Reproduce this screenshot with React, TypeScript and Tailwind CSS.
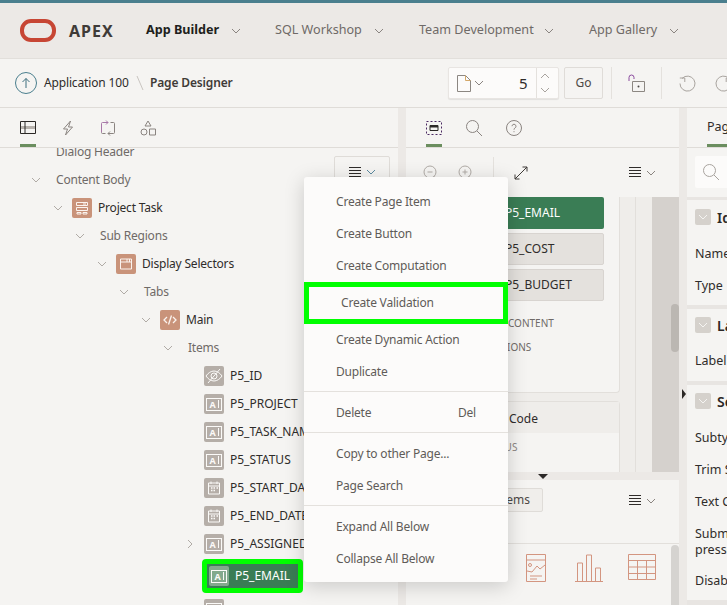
import React from "react";

const FONT = "font-['Noto_Sans',sans-serif]";

function Chevron({ className = "", color = "#8a8480", size = 10 }: { className?: string; color?: string; size?: number }) {
  return (
    <svg width={size} height={size} viewBox="0 0 10 10" fill="none" className={`shrink-0 ${className}`}>
      <path d="M1 3l4 4 4-4" stroke={color} strokeWidth="1" />
    </svg>
  );
}

function Hamburger({ color = "#2f2c2a" }: { color?: string }) {
  return (
    <svg width="12" height="11" viewBox="0 0 12 11" fill="none">
      <path d="M0 .5h12M0 3.5h12M0 6.5h12M0 9.5h12" stroke={color} strokeWidth="1" />
    </svg>
  );
}

function MenuToggle({ chev = "#8a8480" }: { chev?: string }) {
  return (
    <div className="flex items-center gap-[5px]">
      <Hamburger />
      <Chevron color={chev} />
    </div>
  );
}

function RegionIcon({ kind }: { kind: "project" | "selector" | "code" }) {
  return (
    <div className="w-5 h-5 rounded-[2px] bg-[#c9937a] flex items-center justify-center shrink-0">
      <svg width="16" height="16" viewBox="0 0 16 16" fill="none" stroke="#fbf3ee" strokeWidth="1">
        {kind === "project" && (
          <>
            <path d="M2.5 2.5h11v3h-11zM9 4h3" />
            <path d="M2.5 7.5h11v3h-11zM3 12.5h4v1.5H3zM9 12.5h4v1.5H9z" />
          </>
        )}
        {kind === "selector" && <path d="M2.5 3h11v10h-11zM2.5 6h11M9 3v3M11.5 3v3" />}
        {kind === "code" && <path d="M5 5L2 8l3 3M11 5l3 3-3 3M9.5 3.5l-3 9" strokeWidth="1.3" />}
      </svg>
    </div>
  );
}

function ItemIcon({ kind, active = false }: { kind: "text" | "date" | "hidden"; active?: boolean }) {
  return (
    <div className={`w-5 h-5 rounded-[2px] flex items-center justify-center shrink-0 ${active ? "bg-[#83a98d]" : "bg-[#b5aea8]"}`}>
      {kind === "text" && (
        <div className="w-[16px] h-[13px] border border-[#fbfaf8] flex items-center justify-center gap-[2px] text-[#fbfaf8] text-[9px] font-bold leading-none">
          <span>A</span>
          <span className="w-px h-[8px] bg-[#fbfaf8]" />
        </div>
      )}
      {kind === "date" && (
        <svg width="16" height="16" viewBox="0 0 16 16" fill="none" stroke="#fbfaf8" strokeWidth="1">
          <path d="M2.5 3h11v11h-11zM2.5 6h11M5 1.5V4M11 1.5V4" />
          <path d="M5 8h1.5M7.5 8H9M10.5 8H12M5 10.5h1.5M7.5 10.5H9" strokeWidth="1.4" />
        </svg>
      )}
      {kind === "hidden" && (
        <svg width="18" height="16" viewBox="0 0 18 16" fill="none" stroke="#fbfaf8" strokeWidth="1">
          <path d="M1 8c2-3 5-5 8-5s6 2 8 5c-2 3-5 5-8 5s-6-2-8-5z" />
          <circle cx="9" cy="8" r="3" />
          <path d="M15 1L3 15" />
        </svg>
      )}
    </div>
  );
}

type Row = {
  label: string;
  indent: number;
  open?: boolean;
  closed?: boolean;
  region?: "project" | "selector" | "code";
  item?: "text" | "date" | "hidden";
};

const TREE: Row[] = [
  { label: "Dialog Header", indent: 34 },
  { label: "Content Body", indent: 34, open: true },
  { label: "Project Task", indent: 56, open: true, region: "project" },
  { label: "Sub Regions", indent: 78, open: true },
  { label: "Display Selectors", indent: 100, open: true, region: "selector" },
  { label: "Tabs", indent: 122, open: true },
  { label: "Main", indent: 144, open: true, region: "code" },
  { label: "Items", indent: 166, open: true },
  { label: "P5_ID", indent: 188, item: "hidden" },
  { label: "P5_PROJECT", indent: 188, item: "text" },
  { label: "P5_TASK_NAME", indent: 188, item: "text" },
  { label: "P5_STATUS", indent: 188, item: "text" },
  { label: "P5_START_DATE", indent: 188, item: "date" },
  { label: "P5_END_DATE", indent: 188, item: "date" },
  { label: "P5_ASSIGNED_TO", indent: 188, closed: true, item: "text" },
];

function TreeRow({ row }: { row: Row }) {
  let text = "ml-[6px] text-[#6f6a67] tracking-[-0.2px]";
  if (row.region) text = "ml-[6px] text-[#2f2c2a] tracking-[-0.2px]";
  if (row.item) text = "ml-[6px] text-[#2f2c2a]";
  return (
    <div className="h-7 flex items-center whitespace-nowrap" style={{ paddingLeft: row.indent - 3 }}>
      <div className="w-[19px] flex justify-start shrink-0">
        {row.open && <Chevron color="#b0aba6" />}
        {row.closed && <Chevron color="#b0aba6" className="-rotate-90" />}
      </div>
      {row.region && <RegionIcon kind={row.region} />}
      {row.item && <ItemIcon kind={row.item} />}
      <span className={`text-[12px] ${text}`}>{row.label}</span>
    </div>
  );
}

function TabIcon({ children }: { children: React.ReactNode }) {
  return (
    <svg width="16" height="16" viewBox="0 0 16 16" fill="none" stroke="#8a8480" strokeWidth="1">
      {children}
    </svg>
  );
}

function PropRow({ label, y }: { label: string; y: string }) {
  return <div className={`text-[12.5px] leading-[18px] text-[#2f2c2a] whitespace-nowrap ${y}`}>{label}</div>;
}

function SectionHead({ label }: { label: string }) {
  return (
    <div className="h-4 flex items-center gap-[6px]">
      <div className="w-4 h-4 rounded-[2px] bg-[#d5d1cc] flex items-center justify-center shrink-0">
        <Chevron color="#f5f4f2" />
      </div>
      <span className="text-[14px] font-semibold text-[#2b2826] whitespace-nowrap">{label}</span>
    </div>
  );
}

function MenuItem({ label, right }: { label: string; right?: string }) {
  return (
    <div className="h-8 pl-8 pr-8 flex items-center justify-between text-[12px] tracking-[-0.2px] text-[#5f5b58] whitespace-nowrap">
      <span>{label}</span>
      {right && <span>{right}</span>}
    </div>
  );
}

function MenuSep() {
  return <div className="mt-[3px] mb-[5px] h-px bg-[#e4e1dd]" />;
}

export default function App() {
  return (
    <div className={`${FONT} relative w-[727px] h-[605px] overflow-hidden bg-[#f5f4f2] flex flex-col`}>
      <div className="h-[3px] bg-[#4a7f8e] shrink-0" />

      {/* header */}
      <header className="h-[56px] shrink-0 bg-[#ece9e6] border-b border-[#e2dfdb] flex items-center pl-5 text-[12.6px] text-[#6f6a67] whitespace-nowrap">
        <div className="w-[36px] h-[23px] rounded-[11px] border-[4px] border-[#c74634] shrink-0" />
        <span className="ml-[13px] w-[77px] text-[16px] font-bold tracking-[1px] text-[#3f3b38] shrink-0">APEX</span>
        <span className="w-[85px] font-bold text-[#201e1c] shrink-0">App Builder</span>
        <Chevron />
        <span className="ml-[34px] w-[99px] shrink-0">SQL Workshop</span>
        <Chevron />
        <span className="ml-[35px] w-[125px] shrink-0">Team Development</span>
        <Chevron />
        <span className="ml-[35px] w-[80px] shrink-0">App Gallery</span>
        <Chevron />
      </header>

      {/* toolbar */}
      <div className="h-[49px] shrink-0 border-b border-[#dfdcd8] flex items-center pl-[15px] text-[12px] text-[#2f2c2a] whitespace-nowrap [&>*]:shrink-0">
        <div className="w-[22px] h-[22px] rounded-full border border-[#4a7f8e] flex items-center justify-center">
          <svg width="12" height="12" viewBox="0 0 12 12" fill="none" stroke="#3d6f7e">
            <path d="M6 11V1.5M2.5 5L6 1.5 9.5 5" />
          </svg>
        </div>
        <span className="ml-[7px] w-[85px] tracking-[-0.15px]">Application 100</span>
        <svg width="8" height="16" viewBox="0 0 8 16" fill="none" className="ml-[7px]">
          <path d="M1 1l6 14" stroke="#c9c5c1" />
        </svg>
        <span className="ml-[6px] w-[298px] font-semibold tracking-[-0.15px] text-[#3f3b38]">Page Designer</span>

        <div className="w-[111px] h-8 bg-[#fcfbfa] rounded-[2px] border border-[#e8e5e2] shadow-[0_1px_1px_rgba(0,0,0,0.08)] flex items-center">
          <svg width="14" height="17" viewBox="0 0 14 17" fill="none" className="ml-[8px] shrink-0">
            <path d="M.5.5h8l5 5v11H.5z" stroke="#8c8782" fill="#fcfbfa" />
            <path d="M8.5.5v5h5" stroke="#d4a869" />
          </svg>
          <Chevron className="ml-[3px]" />
          <span className="ml-[35px] w-[9px] text-[15px] text-[#2f2c2a]">5</span>
          <div className="ml-[8px] flex-1 pr-[5px] h-full border-l border-[#e4e1dd] flex flex-col items-center justify-center gap-[4px]">
            <Chevron color="#a8a39e" className="rotate-180" />
            <Chevron color="#a8a39e" />
          </div>
        </div>
        <div className="ml-[5px] w-[39px] h-8 bg-[#f5f4f2] rounded-[2px] border border-[#dfdcd8] flex items-center justify-center text-[#4d4946]">Go</div>
        <div className="ml-2 w-px h-8 bg-[#e4e1dd]" />
        <svg width="17" height="18" viewBox="0 0 17 18" fill="none" className="ml-4">
          <path d="M1 7V3.5a2.5 2.5 0 0 1 5 0V5" stroke="#8a4a9e" />
          <path d="M4.5 7.5h12v10h-12z" stroke="#8c8782" />
          <circle cx="10.5" cy="12.5" r="1" fill="#4d4946" />
        </svg>
        <div className="ml-4 w-px h-8 bg-[#e4e1dd]" />
        <svg width="17" height="17" viewBox="0 0 17 17" fill="none" stroke="#a8a39e" className="ml-[17px]">
          <path d="M3 3.5A7.5 7.5 0 1 1 1 8.5" />
          <path d="M.8 3h5v4" />
        </svg>
        <svg width="17" height="17" viewBox="0 0 17 17" fill="none" stroke="#a8a39e" className="ml-[19px]">
          <path d="M14 3.5A7.5 7.5 0 1 0 16 8.5" />
          <path d="M16.2 3h-5v4" />
        </svg>
      </div>

      {/* panels */}
      <div className="flex-1 min-h-0 flex">
        {/* left */}
        <div className="w-[398px] shrink-0 flex flex-col min-h-0">
          <div className="h-10 shrink-0 border-b border-[#dfdcd8] relative flex items-center pl-5 gap-[24px]">
            <svg width="16" height="14" viewBox="0 0 16 14" fill="none">
              <path d="M.5.5h15v12h-15z" stroke="#2b2826" />
              <path d="M1 5h14v3H1z" fill="#b7b2ad" />
              <path d="M5 1v11" stroke="#2b2826" />
            </svg>
            <TabIcon>
              <path d="M10.5 1L3.5 9h4l-2 6 7-8h-4l2-6z" />
            </TabIcon>
            <TabIcon>
              <path d="M1.5 12.5V3.500a1 1 0 0 1 1-1H8M6 .5l2 2-2 2" stroke="#a878a8" />
              <path d="M14.500 3.500v9a1 1 0 0 1-1 1H8M10 11.500l-2 2 2 2M10.500 2.500h3a1 1 0 0 1 1 1M1.500 12.500a1 1 0 0 0 1 1h3" />
            </TabIcon>
            <TabIcon>
              <path d="M8 1l3 5H5z" />
              <circle cx="4" cy="12" r="3" />
              <path d="M9.500 9h6v6h-6z" />
            </TabIcon>
            <div className="absolute left-5 bottom-0 w-4 h-[3px] bg-[#6b8e5f]" />
          </div>
          <div className="flex-1 min-h-0 overflow-hidden relative">
            <div className="-mt-[10px]">
              {TREE.map((row) => (
                <TreeRow key={row.label} row={row} />
              ))}
              <div className="ml-[202px] mt-px w-[101px] h-[34px] rounded-[4px] border-[5px] border-[#00ff00] bg-[#3a7d55] flex items-center pl-[2px] text-[12px] text-white">
                <ItemIcon kind="text" active />
                <span className="ml-[6px]">P5_EMAIL</span>
              </div>
              <div className="ml-[204px] mt-[6px]">
                <ItemIcon kind="text" />
              </div>
            </div>
            <div className="absolute left-[334px] top-2 w-[56px] h-8 rounded-[2px] border border-[#dfdcd8] flex items-center justify-center">
              <MenuToggle chev="#5b8aa0" />
            </div>
          </div>
        </div>

        <div className="w-2 shrink-0 bg-[#ece9e6]" />

        {/* center */}
        <div className="w-[273px] shrink-0 flex flex-col min-h-0">
          <div className="h-10 shrink-0 border-b border-[#dfdcd8] relative flex items-center pl-5 gap-[24px]">
            <svg width="16" height="14" viewBox="0 0 16 14" fill="none">
              <path d="M.5.5h15v13h-15z" stroke="#4b2a63" strokeDasharray="2 2" />
              <path d="M4 4.500h8v5H4z" stroke="#2b2826" />
              <path d="M4 5h8v1.500H4z" fill="#2b2826" />
            </svg>
            <svg width="16" height="16" viewBox="0 0 16 16" fill="none" stroke="#8a8480">
              <circle cx="6.500" cy="6.500" r="6" />
              <path d="M11 11l5 5" />
            </svg>
            <svg width="16" height="16" viewBox="0 0 16 16" fill="none" stroke="#8a8480">
              <circle cx="8" cy="8" r="7.500" />
              <path d="M6 6.200a2 2 0 1 1 3 1.800c-.7.400-1 .8-1 1.700M8 11.200v1" />
            </svg>
            <div className="absolute left-5 bottom-0 w-4 h-[3px] bg-[#6b8e5f]" />
          </div>

          <div className="h-[49px] shrink-0 flex items-center pl-[17px] pr-[23px]">
            <svg width="16" height="16" viewBox="0 0 16 16" fill="none" stroke="#b0aba6">
              <circle cx="7" cy="7" r="6" />
              <path d="M4.500 7h5M11.500 11.500L15 15" />
            </svg>
            <svg width="16" height="16" viewBox="0 0 16 16" fill="none" stroke="#b0aba6" className="ml-[19px]">
              <circle cx="7" cy="7" r="6" />
              <path d="M4.500 7h5M7 4.500v5M11.500 11.500L15 15" />
            </svg>
            <div className="ml-[19px] w-px h-8 bg-[#e4e1dd]" />
            <svg width="14" height="14" viewBox="0 0 14 14" fill="none" stroke="#3f3b38" className="ml-5">
              <path d="M1 13L13 1M8.500 1H13v4.500M1 8.500V13h4.500" />
            </svg>
            <div className="ml-auto">
              <MenuToggle />
            </div>
          </div>

          <div className="h-[275px] shrink-0 relative flex bg-[#efedea]">
            <div className="w-[214px] shrink-0 flex flex-col">
              <div className="h-[196px] shrink-0 bg-[#f5f4f2] border-b border-r border-[#e2dfdb] rounded-br-[4px] pl-[64px]">
                <div className="w-[134px] h-8 rounded-[2px] bg-[#3a7d55] text-white text-[12px] flex items-center pl-[35px]">P5_EMAIL</div>
                <div className="mt-1 w-[134px] h-8 rounded-[2px] bg-[#e4e1dd] border border-[#d8d4d0] text-[#2f2c2a] text-[12px] flex items-center pl-[34px]">P5_COST</div>
                <div className="mt-1 w-[134px] h-8 rounded-[2px] bg-[#e4e1dd] border border-[#d8d4d0] text-[#2f2c2a] text-[12px] flex items-center pl-[34px]">P5_BUDGET</div>
                <div className="mt-[14px] pl-[38px] text-[10px] text-[#6f6a67] leading-[16px]">CONTENT</div>
                <div className="mt-2 pl-[18px] text-[10px] text-[#6f6a67] leading-[16px]">REGIONS</div>
              </div>
              <div className="mt-2 flex-1 bg-[#f5f4f2] border border-b-0 border-[#e2dfdb] rounded-t-[4px]">
                <div className="h-[31px] bg-[#efedea] flex items-center pl-[102px] pt-[2px] text-[12px] text-[#2f2c2a]">Code</div>
                <div className="pl-[76px] pt-[7px] text-[10px] text-[#8a8480]">STATUS</div>
              </div>
            </div>
            <div className="w-4 shrink-0 border-r border-[#e2dfdb]" />
            <div className="w-[16px] shrink-0" />
            <div className="flex-1 bg-[#d5d1cd]" />
            <div className="absolute right-0 top-[107px] w-2 h-12 rounded-[4px] bg-[#bbb7b2]" />
          </div>

          <div className="h-2 shrink-0 bg-[#ece9e6] relative">
            <div className="absolute left-[132px] top-[2px] w-0 h-0 border-x-[5px] border-x-transparent border-t-[5px] border-t-[#2b2826]" />
          </div>

          <div className="flex-1 min-h-0 relative">
            <div className="h-[64px] border-b border-[#e2dfdb] relative pt-2">
              <div className="ml-[90px] w-[47px] h-6 rounded-[2px] bg-[#f0eeeb] border border-[#dfdcd8] flex items-center justify-end pr-3 text-[12px] text-[#4d4946]">
                Items
              </div>
              <div className="absolute left-[223px] top-[15px]">
                <MenuToggle />
              </div>
            </div>
            <div className="flex pl-[120px] pt-[10px]">
              <svg width="20" height="28" viewBox="0 0 20 28" fill="none" stroke="#d39580">
                <path d="M.5.5h19v27H.5zM.5 6h19M4 22h12M4 25h7" />
                <circle cx="4" cy="11" r="1.500" />
                <path d="M1 17l5 1 5-6 3 3 5-4" />
              </svg>
              <svg width="28" height="28" viewBox="0 0 28 28" fill="none" stroke="#d39580" className="ml-[29px]">
                <path d="M0 27.500h28M2.500 27V9h5v18M11.500 27V1h5v26M20.500 27V14h5v13" />
              </svg>
              <svg width="28" height="26" viewBox="0 0 28 26" fill="none" stroke="#d39580" className="ml-[25px]">
                <path d="M.5.500h27v25H.5zM.5 6.500h27M.5 13h27M.5 19.500h27M9.500 6.500v19M18.500 6.500v19" />
              </svg>
            </div>
            <div className="absolute right-0 top-[65px] bottom-0 w-2 rounded-t-[4px] bg-[#d5d3d0]" />
          </div>
        </div>

        <div className="w-2 shrink-0 bg-[#ece9e6] relative">
          <div className="absolute left-[3px] top-[281px] w-0 h-0 border-y-[5px] border-y-transparent border-l-[4px] border-l-[#2b2826]" />
        </div>

        {/* right */}
        <div className="flex-1 min-w-0 overflow-hidden flex flex-col">
          <div className="h-10 shrink-0 border-b border-[#dfdcd8] relative flex items-center pl-5 text-[12.5px] text-[#2f2c2a] whitespace-nowrap">
            Page
            <div className="absolute left-5 right-0 bottom-0 h-[3px] bg-[#6b8e5f]" />
          </div>
          <div className="h-[49px] shrink-0 pl-2 pt-2">
            <div className="h-8 w-[60px] bg-[#fcfbfa] rounded-l-[2px] flex items-center pl-2">
              <svg width="16" height="16" viewBox="0 0 16 16" fill="none" stroke="#a8a39e">
                <circle cx="6.500" cy="6.500" r="6" />
                <path d="M11 11l5 5" />
              </svg>
            </div>
          </div>

          <div className="h-[108px] shrink-0 border-t-[3px] border-[#e8e5e2] pl-2 pt-[9px]">
            <SectionHead label="Identification" />
            <PropRow label="Name" y="mt-5" />
            <PropRow label="Type" y="mt-[14px]" />
          </div>

          <div className="h-[76px] shrink-0 border-t-4 border-[#e8e5e2] pl-2 pt-2">
            <SectionHead label="Layout" />
            <PropRow label="Label" y="mt-[19px]" />
          </div>

          <div className="h-[219px] shrink-0 border-t-4 border-[#e8e5e2] pl-2 pt-2">
            <SectionHead label="Settings" />
            <PropRow label="Subtype" y="mt-5" />
            <PropRow label="Trim Spaces" y="mt-[14px]" />
            <PropRow label="Text Case" y="mt-[14px]" />
            <div className="mt-[15px] w-[125px] text-[12.5px] leading-[16px] text-[#2f2c2a]">Submit when Enter pressed</div>
            <PropRow label="Disabled" y="mt-[14px]" />
          </div>
          <div className="flex-1 bg-[#e8e5e2]" />
        </div>
      </div>

      {/* context menu */}
      <div className="absolute left-[304px] top-[177px] w-[204px] h-[405px] rounded-[3px] bg-[#fcfbfa] shadow-[0_4px_20px_rgba(0,0,0,0.18)] pt-[9px]">
        <MenuItem label="Create Page Item" />
        <MenuItem label="Create Button" />
        <MenuItem label="Create Computation" />
        <div className="h-[42px] border-[5px] border-[#00ff00] pl-8 flex items-center text-[12px] tracking-[-0.2px] text-[#5f5b58]">Create Validation</div>
        <MenuItem label="Create Dynamic Action" />
        <MenuItem label="Duplicate" />
        <MenuSep />
        <MenuItem label="Delete" right="Del" />
        <MenuSep />
        <MenuItem label="Copy to other Page..." />
        <MenuItem label="Page Search" />
        <MenuSep />
        <MenuItem label="Expand All Below" />
        <MenuItem label="Collapse All Below" />
      </div>
    </div>
  );
}
